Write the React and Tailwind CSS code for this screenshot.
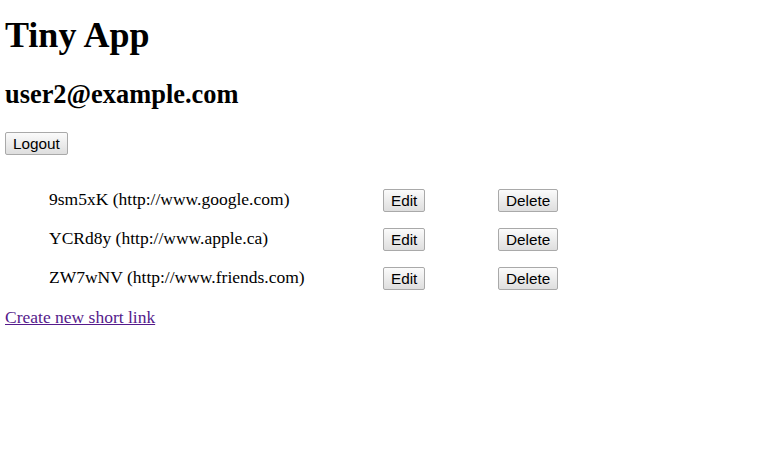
const urls = [
  { id: "9sm5xK", long: "http://www.google.com" },
  { id: "YCRd8y", long: "http://www.apple.ca" },
  { id: "ZW7wNV", long: "http://www.friends.com" },
];

function Button({ children, className = "" }) {
  return (
    <button
      type="button"
      className={
        "h-[23px] rounded-[2px] border border-[#a9a9a9] bg-gradient-to-b from-[#fbfbfb] to-[#dedede] px-[7px] text-[15.3px] leading-none text-black " +
        className
      }
      style={{ fontFamily: '"Liberation Sans", Arial, sans-serif' }}
    >
      {children}
    </button>
  );
}

export default function App() {
  return (
    <div
      className="min-h-[453px] bg-white px-[5px] text-[17.5px] text-black"
      style={{ fontFamily: '"Liberation Serif", "Times New Roman", serif' }}
    >
      <h1 className="pt-[15px] text-[36px] font-bold leading-[40px]">Tiny App</h1>
      <h2 className="mt-[24px] text-[26.4px] font-bold leading-[30px]">user2@example.com</h2>
      <div className="mt-[21px]">
        <Button>Logout</Button>
      </div>

      <div className="mt-[32px] flex flex-col gap-[16px]">
        {urls.map((u) => (
          <div key={u.id} className="flex h-[23px] items-center">
            <div className="w-[378px] pl-[44px] leading-[23px]">
              {u.id} ({u.long})
            </div>
            <div className="w-[115px]">
              <Button>Edit</Button>
            </div>
            <div>
              <Button>Delete</Button>
            </div>
          </div>
        ))}
      </div>

      <div className="mt-[17px] leading-[22px]">
        <a href="#" className="text-[#551a8b] underline">
          Create new short link
        </a>
      </div>
    </div>
  );
}
